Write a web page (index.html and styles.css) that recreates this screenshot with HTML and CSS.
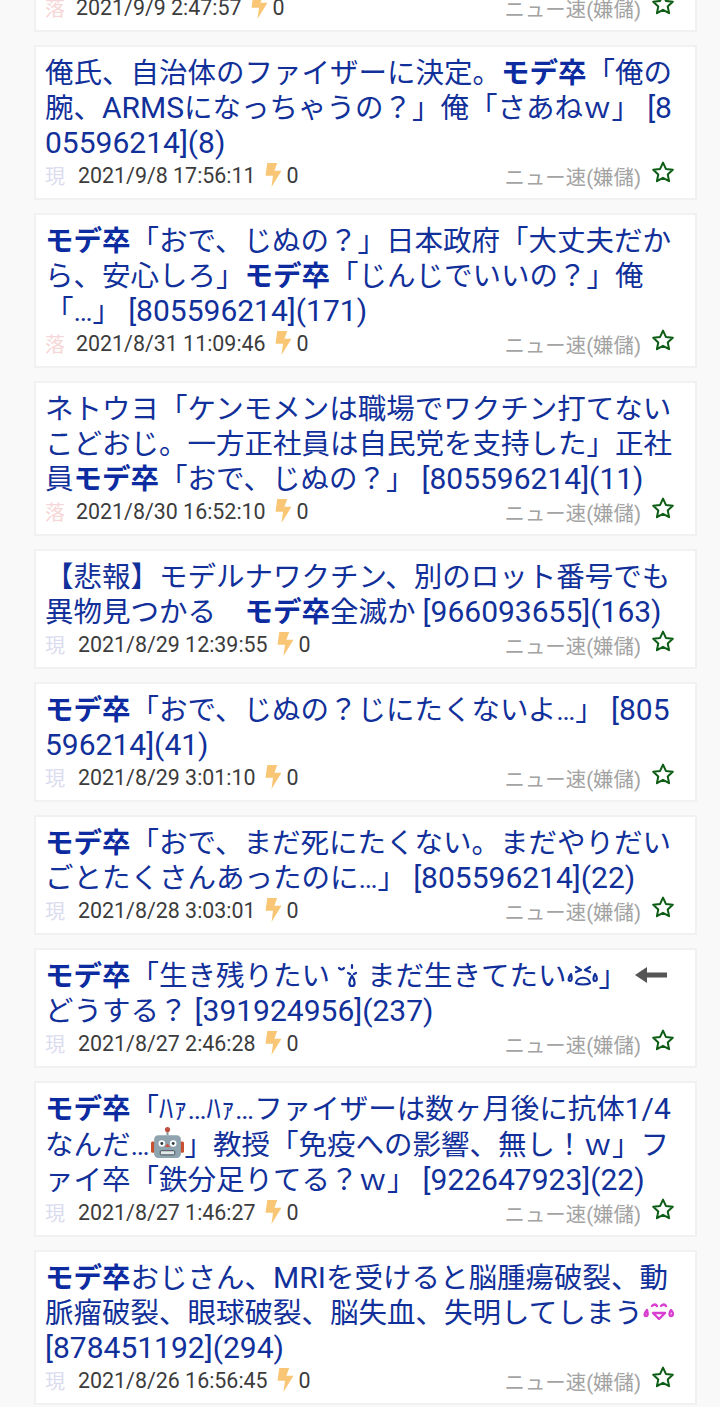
FILE: index.html
```html
<!DOCTYPE html>
<html lang="ja">
<head>
  <meta charset="UTF-8">
  <title>スレッド一覧</title>
  <link rel="stylesheet" href="styles.css">
</head>
<body>
  <svg class="defs" width="0" height="0">
    <symbol id="bolt" viewBox="0 0 16 24">
      <path d="M1.800 0h9.900L8.900 7.800H16L6 24l1.500-11.300H0z" fill="#f8c675"/>
    </symbol>
    <symbol id="star" viewBox="0 0 24 24">
      <path d="M12 2.600l2.900 6.300 6.900.8-5.100 4.700 1.400 6.800-6.100-3.400-6.100 3.400 1.400-6.800-5.100-4.700 6.900-.8z" fill="none" stroke="#0c5c14" stroke-width="2" stroke-linejoin="round"/>
    </symbol>
  </svg>

  <div class="list">
    <div class="card card-cut">
      <div class="meta">
        <span class="mark mark-off">落</span><span class="date">2021/9/9 2:47:57</span>
        <svg class="bolt"><use href="#bolt"/></svg><span class="count">0</span>
        <span class="board">ニュー速(嫌儲)</span>
        <svg class="star"><use href="#star"/></svg>
      </div>
    </div>

    <div class="card">
      <div class="title">俺氏、自治体のファイザーに決定。<b>モデ卒</b>「俺の腕、<span class="num">ARMS</span>になっちゃうの？」俺「さあねｗ」 <span class="num">[805596214](8)</span></div>
      <div class="meta">
        <span class="mark">現</span><span class="date">2021/9/8 17:56:11</span>
        <svg class="bolt"><use href="#bolt"/></svg><span class="count">0</span>
        <span class="board">ニュー速(嫌儲)</span>
        <svg class="star"><use href="#star"/></svg>
      </div>
    </div>

    <div class="card">
      <div class="title"><b>モデ卒</b>「おで、じぬの？」日本政府「大丈夫だから、安心しろ」<b>モデ卒</b>「じんじでいいの？」俺「…」 <span class="num">[805596214](171)</span></div>
      <div class="meta">
        <span class="mark mark-off">落</span><span class="date">2021/8/31 11:09:46</span>
        <svg class="bolt"><use href="#bolt"/></svg><span class="count">0</span>
        <span class="board">ニュー速(嫌儲)</span>
        <svg class="star"><use href="#star"/></svg>
      </div>
    </div>

    <div class="card">
      <div class="title">ネトウヨ「ケンモメンは職場でワクチン打てないこどおじ。一方正社員は自民党を支持した」正社員<b>モデ卒</b>「おで、じぬの？」 <span class="num">[805596214](11)</span></div>
      <div class="meta">
        <span class="mark mark-off">落</span><span class="date">2021/8/30 16:52:10</span>
        <svg class="bolt"><use href="#bolt"/></svg><span class="count">0</span>
        <span class="board">ニュー速(嫌儲)</span>
        <svg class="star"><use href="#star"/></svg>
      </div>
    </div>

    <div class="card">
      <div class="title">【悲報】モデルナワクチン、別のロット番号でも異物見つかる　<b>モデ卒</b>全滅か <span class="num">[966093655](163)</span></div>
      <div class="meta">
        <span class="mark">現</span><span class="date">2021/8/29 12:39:55</span>
        <svg class="bolt"><use href="#bolt"/></svg><span class="count">0</span>
        <span class="board">ニュー速(嫌儲)</span>
        <svg class="star"><use href="#star"/></svg>
      </div>
    </div>

    <div class="card">
      <div class="title"><b>モデ卒</b>「おで、じぬの？じにたくないよ…」 <span class="num">[805596214](41)</span></div>
      <div class="meta">
        <span class="mark">現</span><span class="date">2021/8/29 3:01:10</span>
        <svg class="bolt"><use href="#bolt"/></svg><span class="count">0</span>
        <span class="board">ニュー速(嫌儲)</span>
        <svg class="star"><use href="#star"/></svg>
      </div>
    </div>

    <div class="card">
      <div class="title"><b>モデ卒</b>「おで、まだ死にたくない。まだやりだいごとたくさんあったのに…」 <span class="num">[805596214](22)</span></div>
      <div class="meta">
        <span class="mark">現</span><span class="date">2021/8/28 3:03:01</span>
        <svg class="bolt"><use href="#bolt"/></svg><span class="count">0</span>
        <span class="board">ニュー速(嫌儲)</span>
        <svg class="star"><use href="#star"/></svg>
      </div>
    </div>

    <div class="card">
      <div class="title"><b>モデ卒</b>「生き残りたい<svg class="emo emo-drop" viewBox="0 0 22 28"><path d="M2 6q2.500 3 5 0M15 3v3M11 11l2 1M19 11l-2 1" fill="none" stroke="#12309a" stroke-width="2.200" stroke-linecap="round"/><path d="M15 14c-3.500 5-3.500 10 0 10s3.500-5 0-10z" fill="none" stroke="#12309a" stroke-width="2.200"/></svg>まだ生きてたい<svg class="emo emo-cry" viewBox="0 0 32 24"><path d="M9 3l5 3-5 2M23 3l-5 3 5 2M9 19c1-7 13-7 14 0-3 2-11 2-14 0zM4 10c-3 4-3 7-1 7s2-3 1-7zM28 10c-2 3-2 7 0 7s3-3 0-7z" fill="none" stroke="#12309a" stroke-width="2.200" stroke-linecap="round" stroke-linejoin="round"/></svg>」<svg class="emo emo-arrow" viewBox="0 0 32 16"><path d="M12 0v5.600h20v4.800H12V16L0 8z" fill="#555"/></svg>どうする？ <span class="num">[391924956](237)</span></div>
      <div class="meta">
        <span class="mark">現</span><span class="date">2021/8/27 2:46:28</span>
        <svg class="bolt"><use href="#bolt"/></svg><span class="count">0</span>
        <span class="board">ニュー速(嫌儲)</span>
        <svg class="star"><use href="#star"/></svg>
      </div>
    </div>

    <div class="card">
      <div class="title"><b>モデ卒</b>「ﾊｧ…ﾊｧ…ファイザーは数ヶ月後に抗体<span class="num">1/4</span>なんだ…<svg class="emo emo-robot" viewBox="0 0 32 32"><path d="M16 8V3" stroke="#8a9aa3" stroke-width="2"/><circle cx="16" cy="2.500" r="2.500" fill="#c0503f"/><rect x="0" y="14" width="4" height="11" rx="1.500" fill="#c8502f"/><rect x="28" y="14" width="4" height="11" rx="1.500" fill="#c8502f"/><rect x="3" y="8" width="26" height="22" rx="4" fill="#8fa4ae"/><circle cx="10.500" cy="16" r="3.200" fill="#fff"/><circle cx="21.500" cy="16" r="3.200" fill="#fff"/><circle cx="10.500" cy="16" r="1.400" fill="#2d3b42"/><circle cx="21.500" cy="16" r="1.400" fill="#2d3b42"/><path d="M16 16l2.500 3.500h-5z" fill="#d4503c"/><rect x="9" y="23" width="14" height="4" rx="1" fill="#e3e8ea" stroke="#2d3b42" stroke-width=".8"/></svg>」教授「免疫への影響、無し！ｗ」ファイ卒「鉄分足りてる？ｗ」 <span class="num">[922647923](22)</span></div>
      <div class="meta">
        <span class="mark">現</span><span class="date">2021/8/27 1:46:27</span>
        <svg class="bolt"><use href="#bolt"/></svg><span class="count">0</span>
        <span class="board">ニュー速(嫌儲)</span>
        <svg class="star"><use href="#star"/></svg>
      </div>
    </div>

    <div class="card">
      <div class="title"><b>モデ卒</b>おじさん、<span class="num">MRI</span>を受けると脳腫瘍破裂、動脈瘤破裂、眼球破裂、脳失血、失明してしまう<svg class="emo emo-smile" viewBox="0 0 32 20"><path d="M9 4q3-3 5 0M18 4q3-3 5 0M10 11h12l-6 6zM4 8c-3 4-3 6-1 6s2-2 1-6zM28 8c-2 2-2 6 0 6s3-3 0-6z" fill="none" stroke="#d83fd0" stroke-width="2.400" stroke-linecap="round" stroke-linejoin="round"/></svg><span class="num">[878451192](294)</span></div>
      <div class="meta">
        <span class="mark">現</span><span class="date">2021/8/26 16:56:45</span>
        <svg class="bolt"><use href="#bolt"/></svg><span class="count">0</span>
        <span class="board">ニュー速(嫌儲)</span>
        <svg class="star"><use href="#star"/></svg>
      </div>
    </div>
  </div>
</body>
</html>
```
FILE: styles.css
```css
html, body { margin: 0; padding: 0; overflow: hidden; }
body { background: #f9f9f9; font-family: Roboto, "Noto Sans CJK JP", sans-serif; }
.defs { display: block; height: 0; }
.list { display: flex; flex-direction: column; gap: 13px; padding: 0 23px 0 34px; }
.card { background: #fff; border: 2px solid #f1f1f1; padding: 9px 10px 8px 9px; }
.card-cut { border-top: 0; margin-top: -11px; padding-top: 4px; height: 29px; }
.title { font-size: 28.5px; line-height: 35px; color: #12309a; width: 628px; word-break: break-all; }
.title b { font-weight: 700; color: #0c2ba0; }
.num { font-size: 30px; line-height: 1; }
.meta { display: flex; align-items: center; height: 30px; margin-top: -1px; font-size: 21.4px; color: #3c3c3c; }
.mark { width: 33px; font-size: 20px; color: #dcdcf0; }
.mark-off { width: 31px; color: #f6d6d6; }
.date { margin-right: 9px; }
.bolt { width: 17px; height: 24px; }
.count { margin-left: 5px; }
.board { margin-left: auto; margin-right: 10px; font-size: 20.4px; color: #a3a3a3; position: relative; top: 1px; }
.star { width: 24px; height: 24px; margin-right: 10px; position: relative; top: -3px; }
.emo { display: inline-block; }
.emo-drop { width: 22px; height: 28px; margin: 0 8px 0 7px; vertical-align: -4px; }
.emo-cry { width: 32px; height: 24px; vertical-align: -2px; }
.emo-arrow { width: 32px; height: 16px; margin-left: 8px; vertical-align: 3px; }
.emo-robot { width: 35px; height: 33px; vertical-align: -5px; }
.emo-smile { width: 32px; height: 20px; margin-right: -4px; vertical-align: 1px; }
```
